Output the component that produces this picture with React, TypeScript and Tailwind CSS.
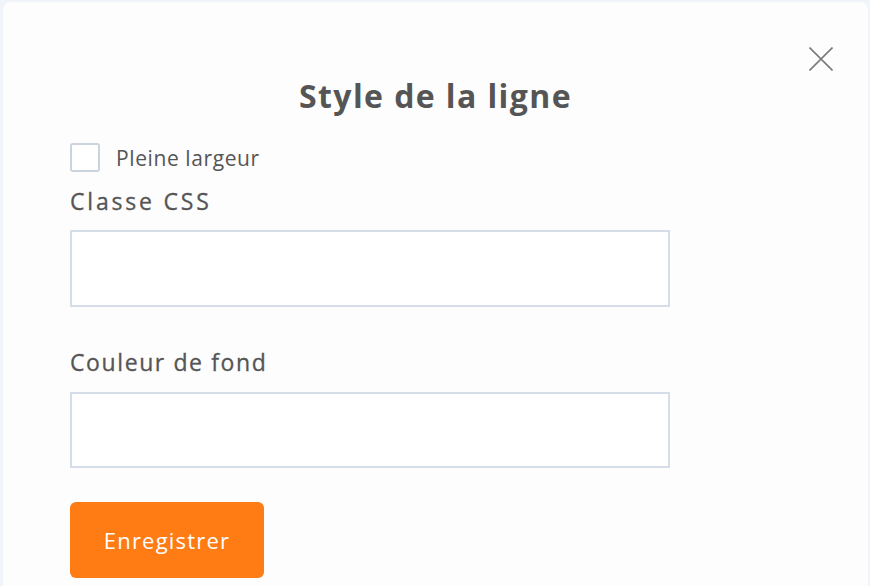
export default function App() {
  return (
    <div className="h-[586px] w-[870px] overflow-hidden bg-[#f1f5fb] pl-[3px] pr-[2px] pt-[2px] font-['Open_Sans',sans-serif] text-[#555555]">
      <div className="relative h-[600px] rounded-lg bg-[#fdfdfd] px-[67px] pt-[74px]">
        <button type="button" className="absolute right-[35px] top-[45px] text-[#7a7a7a]">
          <svg width="24" height="24" viewBox="0 0 24 24" fill="none" stroke="currentColor" strokeWidth="1.6">
            <path d="M0.5 0.5 23.5 23.5M23.5 0.5 0.5 23.5" />
          </svg>
        </button>

        <h2 className="text-center text-[32px] font-bold leading-[40px] tracking-[1.4px]">
          Style de la ligne
        </h2>

        <label className="mt-[27px] flex items-center gap-4">
          <span className="h-[29px] w-[30px] rounded-[3px] border-2 border-[#cbd3df] bg-white" />
          <span className="text-[21px] leading-6 tracking-[0.6px]">Pleine largeur</span>
        </label>

        <div className="mt-[15px] text-[23px] leading-7 tracking-[2.8px] [-webkit-text-stroke:0.3px_#555555]">
          Classe CSS
        </div>
        <input
          type="text"
          className="mt-[15px] block h-[77px] w-[600px] border-2 border-[#d5dde8] bg-white outline-none"
        />

        <div className="mt-[41px] text-[23px] leading-7 tracking-[1.6px] [-webkit-text-stroke:0.3px_#555555]">
          Couleur de fond
        </div>
        <input
          type="text"
          className="mt-[16px] block h-[76px] w-[600px] border-2 border-[#d5dde8] bg-white outline-none"
        />

        <button
          type="button"
          className="mt-[34px] h-[76px] w-[194px] rounded-md bg-[#ff7b14] text-[22px] tracking-[1.2px] text-white"
        >
          Enregistrer
        </button>
      </div>
    </div>
  );
}
